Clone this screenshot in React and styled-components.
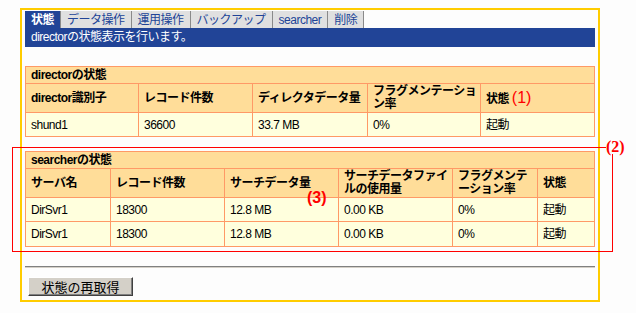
import styled, { createGlobalStyle } from "styled-components";

const GlobalStyle = createGlobalStyle`
  body {
    margin: 8px;
    background: #fdfdfd;
    font-family: "Liberation Sans", "Noto Sans CJK JP", sans-serif;
    font-size: 12px;
    letter-spacing: -0.5px;
  }
`;

const Frame = styled.div`
  box-sizing: border-box;
  width: 580px;
  margin-left: 12px;
  border: 2px solid #ffcc00;
  padding: 1px 3px 4px 3px;
`;

const TabBar = styled.div`
  display: flex;
  height: 17px;
`;

const Tab = styled.div`
  display: flex;
  align-items: center;
  padding: 0 6px;
  line-height: 14px;
  background: ${(p) => (p.$active ? "#214497" : "#e0e0e0")};
  color: ${(p) => (p.$active ? "#ffffff" : "#214497")};
  font-weight: ${(p) => (p.$active ? "bold" : "normal")};
  border-right: 1px solid #8a8a8a;
`;

const Band = styled.div`
  height: 19px;
  background: #214497;
  color: #ffffff;
  padding-left: 6px;
  line-height: 19px;
`;

const Section = styled.div`
  position: relative;
  margin-top: ${(p) => p.$top}px;
`;

const Table = styled.table`
  width: 100%;
  border-collapse: collapse;
  table-layout: fixed;
  border: 1px solid #ff9966;
`;

const TitleCell = styled.td`
  height: 16px;
  padding: 0 5px;
  background: #ffdd99;
  border: 1px solid #ff9966;
  font-weight: bold;
  line-height: 14px;
`;

const HeadCell = styled.th`
  height: 28px;
  padding: 0 2px 0 5px;
  background: #ffdd99;
  border: 1px solid #ff9966;
  text-align: left;
  font-weight: bold;
  line-height: 13px;
`;

const Cell = styled.td`
  height: ${(p) => p.$h || 23}px;
  padding: 0 5px;
  background: #ffffdd;
  border: 1px solid #ff9966;
  line-height: 14px;
`;

const Mark = styled.span`
  color: #ff0000;
  font-family: "Liberation Sans", sans-serif;
  font-size: 16px;
  font-weight: ${(p) => (p.$bold ? "bold" : "normal")};
  letter-spacing: 0;
`;

const FloatMark = styled(Mark)`
  position: absolute;
  left: ${(p) => p.$x}px;
  top: ${(p) => p.$y}px;
  line-height: 16px;
`;

const RedBox = styled.div`
  position: absolute;
  left: -13px;
  top: -4px;
  width: 600px;
  height: 104px;
  border-left: 1px solid #ff0000;
  border-bottom: 1px solid #ff0000;
  pointer-events: none;
`;

const RedTop = styled.div`
  position: absolute;
  left: 0;
  top: 0;
  width: 593px;
  border-top: 1px solid #ff0000;
`;

const RedSide = styled.div`
  position: absolute;
  right: 0;
  top: 7px;
  bottom: -1px;
  border-right: 1px solid #ff0000;
`;

const RedLabel = styled(Mark)`
  position: absolute;
  left: 593px;
  top: -8px;
  line-height: 16px;
  font-family: "Liberation Serif", serif;
`;

const Rule = styled.div`
  margin-top: 19px;
  border-top: 1px solid #808080;
  border-bottom: 1px solid #d4d0c8;
`;

const Button = styled.button`
  display: block;
  margin: 9px 0 0 3px;
  width: 105px;
  height: 19px;
  padding: 0;
  background: #d4d0c8;
  border: 1px solid;
  border-color: #ffffff #404040 #404040 #ffffff;
  box-shadow: inset -1px -1px 0 #808080;
  font-family: "Noto Sans CJK JP", sans-serif;
  font-size: 13px;
  line-height: 15px;
  letter-spacing: 0;
  color: #000000;
`;

const tabs = ["状態", "データ操作", "運用操作", "バックアップ", "searcher", "削除"];

const searchers = [
  ["DirSvr1", "18300", "12.8 MB", "0.00 KB", "0%", "起動"],
  ["DirSvr1", "18300", "12.8 MB", "0.00 KB", "0%", "起動"],
];

export default function App() {
  return (
    <>
      <GlobalStyle />
      <Frame>
        <TabBar>
          {tabs.map((t, i) => (
            <Tab key={t} $active={i === 0}>{t}</Tab>
          ))}
        </TabBar>
        <Band>directorの状態表示を行います。</Band>

        <Section $top={19}>
          <Table>
            <colgroup>
              <col style={{ width: 113 }} />
              <col style={{ width: 114 }} />
              <col style={{ width: 115 }} />
              <col style={{ width: 113 }} />
              <col />
            </colgroup>
            <tbody>
              <tr>
                <TitleCell colSpan={5}>directorの状態</TitleCell>
              </tr>
              <tr>
                <HeadCell>director識別子</HeadCell>
                <HeadCell>レコード件数</HeadCell>
                <HeadCell>ディレクタデータ量</HeadCell>
                <HeadCell>フラグメンテーション率</HeadCell>
                <HeadCell>
                  状態 <Mark>(1)</Mark>
                </HeadCell>
              </tr>
              <tr>
                <Cell>shund1</Cell>
                <Cell>36600</Cell>
                <Cell>33.7 MB</Cell>
                <Cell>0%</Cell>
                <Cell>起動</Cell>
              </tr>
            </tbody>
          </Table>
        </Section>

        <Section $top={14}>
          <Table>
            <colgroup>
              <col style={{ width: 85 }} />
              <col style={{ width: 114 }} />
              <col style={{ width: 114 }} />
              <col style={{ width: 114 }} />
              <col style={{ width: 85 }} />
              <col />
            </colgroup>
            <tbody>
              <tr>
                <TitleCell colSpan={6}>searcherの状態</TitleCell>
              </tr>
              <tr>
                <HeadCell>サーバ名</HeadCell>
                <HeadCell>レコード件数</HeadCell>
                <HeadCell>サーチデータ量</HeadCell>
                <HeadCell>サーチデータファイルの使用量</HeadCell>
                <HeadCell>フラグメンテーション率</HeadCell>
                <HeadCell>状態</HeadCell>
              </tr>
              {searchers.map((row, r) => (
                <tr key={r}>
                  {row.map((v, c) => (
                    <Cell key={c} $h={r === 0 ? 23 : 24}>{v}</Cell>
                  ))}
                </tr>
              ))}
            </tbody>
          </Table>
          <FloatMark $bold $x={282} $y={39}>(3)</FloatMark>
          <RedBox>
            <RedTop />
            <RedSide />
            <RedLabel $bold>(2)</RedLabel>
          </RedBox>
        </Section>

        <Rule />
        <Button>状態の再取得</Button>
      </Frame>
    </>
  );
}
